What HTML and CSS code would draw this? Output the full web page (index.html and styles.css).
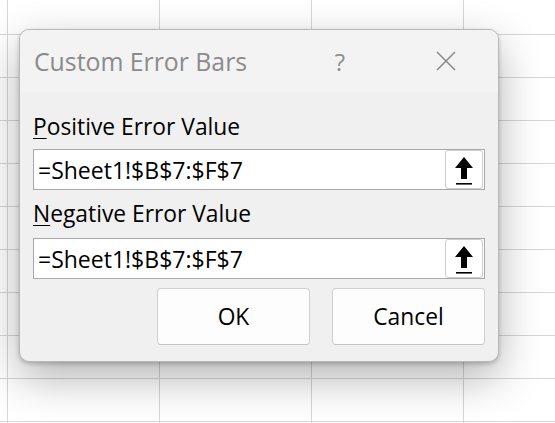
FILE: index.html
```html
<!DOCTYPE html>
<html lang="en">
<head>
    <meta charset="UTF-8">
    <meta name="viewport" content="width=device-width, initial-scale=1.0">
    <title>Custom Error Bars</title>
    <link rel="stylesheet" href="styles.css">
</head>
<body>
    <div class="dialog">
        <div class="titlebar">
            <span class="title">Custom Error Bars</span>
            <span class="help">?</span>
            <span class="close">
                <svg width="20" height="20" viewBox="0 0 20 20">
                    <path d="M1 1 L19 19 M19 1 L1 19" stroke="#8a8a8a" stroke-width="1.5" fill="none"/>
                </svg>
            </span>
        </div>
        <div class="content">
            <label class="field-label" for="posValue"><u>P</u>ositive Error Value</label>
            <div class="ref-box">
                <input type="text" id="posValue" value="=Sheet1!$B$7:$F$7">
                <button class="collapse" type="button">
                    <svg width="18" height="28" viewBox="0 0 18 28">
                        <path d="M9 0 L18 11 L12 11 L12 22 L6 22 L6 11 L0 11 Z" fill="#000"/>
                        <rect x="1" y="26" width="16" height="1.6" fill="#000"/>
                    </svg>
                </button>
            </div>

            <label class="field-label" for="negValue"><u>N</u>egative Error Value</label>
            <div class="ref-box">
                <input type="text" id="negValue" value="=Sheet1!$B$7:$F$7">
                <button class="collapse" type="button">
                    <svg width="18" height="28" viewBox="0 0 18 28">
                        <path d="M9 0 L18 11 L12 11 L12 22 L6 22 L6 11 L0 11 Z" fill="#000"/>
                        <rect x="1" y="26" width="16" height="1.6" fill="#000"/>
                    </svg>
                </button>
            </div>

            <div class="actions">
                <button class="btn" type="button">OK</button>
                <button class="btn" type="button">Cancel</button>
            </div>
        </div>
    </div>
</body>
</html>
```

FILE: styles.css
```css
html, body {
    margin: 0;
    height: 100%;
    overflow: hidden;
}
body {
    font-family: "Open Sans", "Noto Sans", sans-serif;
    background-color: #fff;
    background-image:
        linear-gradient(to right, #d6d6d6 1px, transparent 1px),
        linear-gradient(to bottom, #d6d6d6 1px, transparent 1px);
    background-size: 152px 100%, 100% 43px;
    background-position: 7px 0, 0 34px;
    background-repeat: repeat-x, repeat-y;
}
.dialog {
    margin: 29px 0 0 19px;
    width: 480px;
    height: 333px;
    box-sizing: border-box;
    border: 1px solid #b8b8b8;
    border-radius: 10px;
    background: #f0f0f0;
    overflow: hidden;
    box-shadow: 0 16px 44px rgba(0, 0, 0, 0.3), 0 2px 4px rgba(0, 0, 0, 0.2);
}
.titlebar {
    height: 62px;
    display: flex;
    align-items: center;
    background: #f3f3f3;
    padding: 0 16px 0 14px;
}
.title {
    flex: 1;
    font-size: 24.8px;
    color: #8b8b8b;
}
.help {
    width: 60px;
    text-align: center;
    font-size: 24px;
    color: #8f8f8f;
    margin-right: 40px;
}
.close {
    width: 72px;
    display: flex;
    justify-content: center;
}
.content {
    padding: 20px 13px 0;
    display: flex;
    flex-direction: column;
}
.field-label {
    font-size: 22.8px;
    line-height: 30px;
    color: #000;
    margin-bottom: 7px;
}
.field-label u {
    text-decoration-thickness: 1px;
    text-underline-offset: 3px;
}
.ref-box + .field-label {
    margin-top: 9px;
    margin-bottom: 9px;
}
.ref-box {
    height: 41px;
    box-sizing: border-box;
    border: 1px solid #a9a9a9;
    background: #fff;
    display: flex;
    align-items: stretch;
    padding-right: 1px;
}
.ref-box input {
    flex: 1;
    min-width: 0;
    border: none;
    outline: none;
    background: transparent;
    padding: 0 0 0 4px;
    margin: 0;
    font-family: inherit;
    font-size: 23px;
    color: #000;
}
.collapse {
    width: 38px;
    margin: 0;
    padding: 2px 1px 0 0;
    border: 1px solid #cdcdcd;
    border-radius: 3px;
    background: #fff;
    display: flex;
    align-items: center;
    justify-content: center;
}
.actions {
    margin-top: 9px;
    display: flex;
    justify-content: flex-end;
    gap: 22px;
}
.btn {
    width: 153px;
    height: 57px;
    margin: 0;
    border: 1px solid #d0d0d0;
    border-bottom-color: #c4c4c4;
    border-radius: 4px;
    background: #fdfdfd;
    font-family: inherit;
    font-size: 22.8px;
    color: #000;
}
```
